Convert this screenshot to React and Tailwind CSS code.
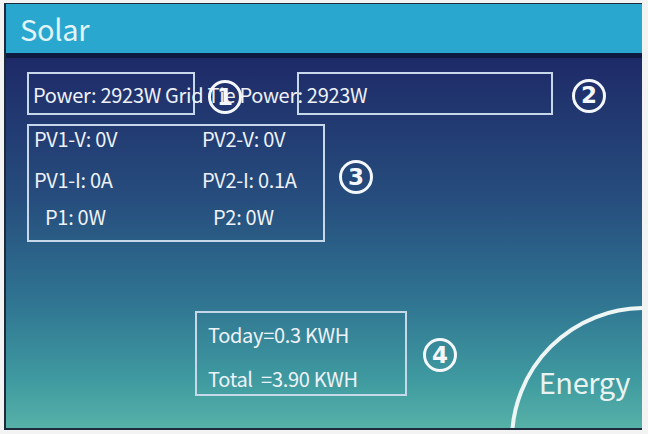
import React from "react";

const FONT = { fontFamily: '"Noto Sans CJK SC", "Noto Sans", sans-serif' };

function Num({ n, className = "" }) {
  return (
    <div
      className={
        "w-[34px] h-[34px] rounded-full border-[3px] border-[#f4f7fb] flex items-center justify-center text-[23px] font-bold text-[#f4f7fb] leading-none tracking-normal " +
        className
      }
      style={{ fontFamily: '"DejaVu Sans", sans-serif' }}
    >
      {n}
    </div>
  );
}

export default function App() {
  return (
    <div className="w-[648px] h-[434px] bg-[#f3f3f3] pt-[3px] pl-[4px]" style={FONT}>
      <div className="w-[638px] h-[427px] flex flex-col border-l-2 border-b-2 border-t border-[#1c2a3c] overflow-hidden">
        <div className="h-[49px] shrink-0 bg-[#2aa7cf] flex items-center pl-[14px]">
          <span className="text-[29px] leading-none text-[#e2f4fa] tracking-[-0.3px]">Solar</span>
        </div>
        <div className="h-[5px] shrink-0 bg-[#0f1a40]" />
        <div className="relative flex-1 pl-[21px] pt-[14px] text-[20px] tracking-[-0.3px] leading-[26px] text-[#eef2f8] bg-[linear-gradient(to_bottom,#1e2a68_0%,#264d7d_38%,#2f7391_65%,#3f9aa0_87%,#56b1a8_100%)]">
          <svg className="absolute inset-0 w-full h-full pointer-events-none" viewBox="0 0 636 370">
            <circle cx="638" cy="382" r="132" fill="none" stroke="#eef6f5" strokeWidth="4" />
          </svg>

          <div className="relative flex items-center">
            <div className="w-[168px] h-[43px] border-2 border-[#c6d8ea] pl-[4px] flex items-center whitespace-nowrap">
              <span className="pt-[2px]">Power: 2923W Grid Tie Power: 2923W</span>
            </div>
            <div className="w-[256px] h-[43px] ml-[102px] border-2 border-[#c6d8ea]" />
            <Num n="2" className="ml-[19px] mt-[4px]" />
            <Num n="1" className="absolute left-[181px] top-[8px]" />
          </div>

          <div className="flex items-start mt-[9px]">
            <div className="w-[298px] h-[118px] border-2 border-[#c6d8ea] pl-[5px] grid grid-cols-[168px_1fr] content-start">
              <div className="h-[26px]">PV1-V: 0V</div>
              <div className="h-[26px]">PV2-V: 0V</div>
              <div className="h-[26px] mt-[15px]">PV1-I: 0A</div>
              <div className="h-[26px] mt-[15px]">PV2-I: 0.1A</div>
              <div className="h-[26px] mt-[11px] pl-[11px]">P1: 0W</div>
              <div className="h-[26px] mt-[11px] pl-[11px]">P2: 0W</div>
            </div>
            <Num n="3" className="ml-[14px] mt-[36px]" />
          </div>

          <div className="flex items-start mt-[69px]">
            <div className="ml-[168px] w-[212px] h-[85px] border-2 border-[#c6d8ea] pl-[11px] pt-[9px] flex flex-col">
              <div className="h-[26px]">Today=0.3 KWH</div>
              <div className="h-[26px] mt-[18px]">Total&nbsp; =3.90 KWH</div>
            </div>
            <Num n="4" className="ml-[16px] mt-[27px]" />
            <div className="ml-auto mr-[12px] mt-[52px] text-[29px] tracking-[-0.4px] leading-[36px] text-[#e8f3f2]">Energy</div>
          </div>
        </div>
      </div>
    </div>
  );
}
